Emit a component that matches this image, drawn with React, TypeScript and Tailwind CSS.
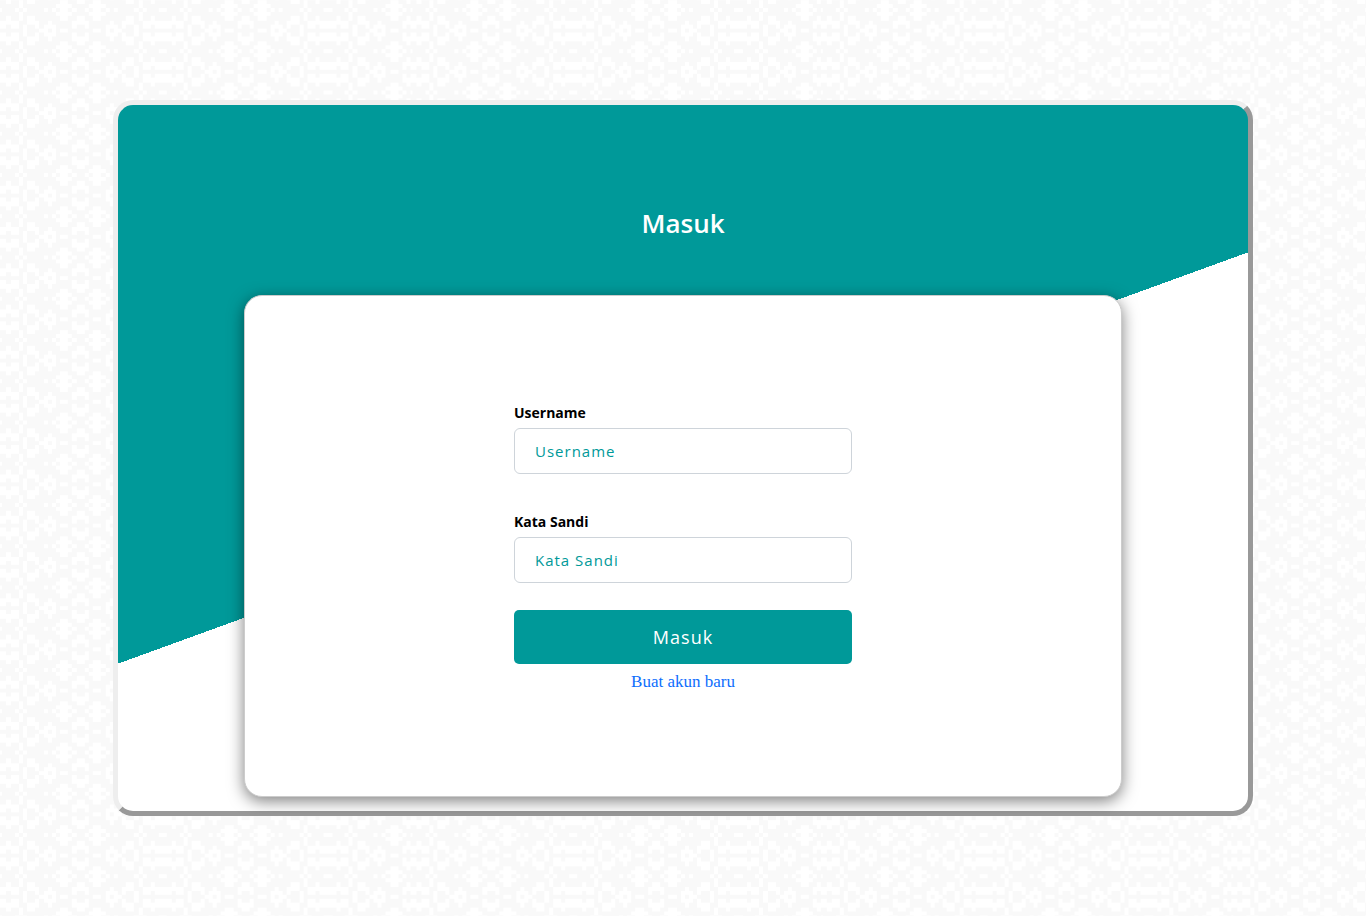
import React from "react";

// One quarter of the ornament; it is mirrored to the right and downwards.
// Row 0 is the axis of the rosettes, row 5 the axis between two rosettes.
const QUARTER = [
  "......#...##.#.##...",
  "##.##.#..#.###....#.",
  "#####..###..#.....##",
  "..#..#.##......##..#",
  ".....#........####..",
  "#...#.#....#.#.##.#.",
];

const TILE_COLUMNS = 99.5;

function ornamentPath(): string {
  let path = "";
  for (let row = -5; row < 5; row++) {
    const line = QUARTER[Math.abs(row)];
    for (let column = 0; column < 101; column++) {
      const phase = column % 40;
      const source = phase < 20 ? phase : 39 - phase;
      if (line[source] === "#") path += `M${column} ${row + 5}h1v1h-1z`;
    }
  }
  return path;
}

function Ornament() {
  return (
    <svg
      aria-hidden="true"
      className="absolute inset-0 h-full w-full"
      shapeRendering="crispEdges"
    >
      <defs>
        <pattern
          id="ornament"
          width={TILE_COLUMNS}
          height="10"
          patternUnits="userSpaceOnUse"
          patternTransform="translate(0 8) scale(4.125)"
        >
          <path d={ornamentPath()} transform="translate(-0.45 0)" fill="#ffffff" />
        </pattern>
      </defs>
      <rect width="100%" height="100%" fill="url(#ornament)" />
    </svg>
  );
}

type FieldProps = { id: string; label: string; type: string };

function Field({ id, label, type }: FieldProps) {
  return (
    <div className="flex flex-col gap-1">
      <label htmlFor={id} className="text-sm leading-[22px] font-bold text-black">
        {label}
      </label>
      <input
        id={id}
        type={type}
        placeholder={label}
        className="h-[46px] w-full rounded-md border border-[#ced4da] bg-white px-5 text-[15px] tracking-[1px] text-[#009999] placeholder:text-[#009999] placeholder:opacity-100"
      />
    </div>
  );
}

export default function App() {
  return (
    <main className="relative flex min-h-screen items-center justify-center bg-[#f9f9f9] font-['Open_Sans','Noto_Sans',sans-serif]">
      <Ornament />
      <section className="relative w-full max-w-[1140px] rounded-[20px] border-5 border-t-[#eeeeee] border-r-[#999999] border-b-[#999999] border-l-[#eeeeee] bg-[linear-gradient(160deg,#009999_50%,#ffffff_50%)] px-6 pt-[97px] pb-[14px] lg:px-[126px]">
        <h1 className="text-center text-[26px] leading-[42px] font-semibold text-white">Masuk</h1>
        <div className="mt-[51px] rounded-[18px] border border-[#cccccc] bg-white px-6 pt-[106px] pb-[102px] shadow-[0_4px_16px_rgba(0,0,0,0.5)]">
          <form className="mx-auto flex max-w-[338px] flex-col" onSubmit={(e) => e.preventDefault()}>
            <div className="flex flex-col gap-[37px]">
              <Field id="username" label="Username" type="text" />
              <Field id="password" label="Kata Sandi" type="password" />
            </div>
            <button
              type="submit"
              className="mt-[27px] h-[54px] w-full rounded-[5px] bg-[#009999] text-lg tracking-[1px] text-white"
            >
              Masuk
            </button>
            <a
              href="#daftar"
              className="mt-[6px] text-center font-['Liberation_Serif',serif] text-[17px] leading-6 text-[#0d6efd]"
            >
              Buat akun baru
            </a>
          </form>
        </div>
      </section>
    </main>
  );
}
